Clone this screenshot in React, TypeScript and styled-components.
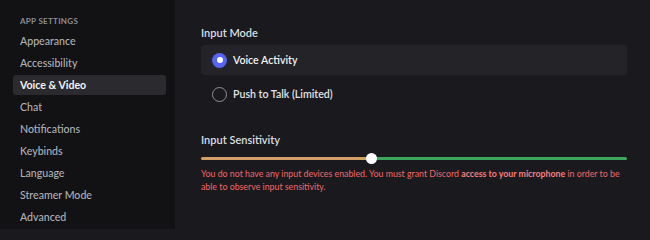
import React from "react";
import styled, { createGlobalStyle } from "styled-components";

const GlobalStyle = createGlobalStyle`
  html, body {
    margin: 0;
    padding: 0;
    background: #1a1a1e;
  }
  body {
    font-family: Lato, "Noto Sans", sans-serif;
    -webkit-font-smoothing: antialiased;
  }
`;

const Page = styled.div`
  display: flex;
  width: 650px;
  height: 229px;
  overflow: hidden;
`;

const Sidebar = styled.nav`
  width: 175px;
  flex-shrink: 0;
  background: #121214;
  padding: 5px 9px 0 13px;
  box-sizing: border-box;
  display: flex;
  flex-direction: column;
`;

const Divider = styled.div`
  height: 1px;
  margin: 0 6px 0 6px;
  background: #222226;
`;

const SectionTitle = styled.div`
  font-size: 8px;
  font-weight: 700;
  letter-spacing: 0.3px;
  color: #8b8e95;
  text-transform: uppercase;
  padding: 9px 0 0 7px;
  height: 15px;
  line-height: 15px;
  margin-bottom: 2px;
`;

const NavItem = styled.div<{ $active?: boolean }>`
  height: 20px;
  line-height: 20px;
  margin-bottom: 2px;
  padding-left: 7px;
  border-radius: 3px;
  font-size: 10.6px;
  font-weight: ${(p) => (p.$active ? 700 : 500)};
  color: ${(p) => (p.$active ? "#f2f3f5" : "#aeb1b6")};
  background: ${(p) => (p.$active ? "#2a2a2f" : "transparent")};
`;

const Main = styled.main`
  flex: 1;
  padding: 24px 23px 0 26px;
  display: flex;
  flex-direction: column;
`;

const Heading = styled.h3`
  margin: 0 0 4px 0;
  font-size: 11px;
  font-weight: 600;
  color: #dbdee1;
  height: 17px;
  line-height: 17px;
`;

const RadioRow = styled.label<{ $selected?: boolean }>`
  display: flex;
  align-items: center;
  gap: 6px;
  height: 30px;
  padding-left: 11px;
  margin-bottom: 4px;
  border-radius: 4px;
  background: ${(p) => (p.$selected ? "#232328" : "transparent")};
  font-size: 10.6px;
  font-weight: 600;
  color: ${(p) => (p.$selected ? "#f2f3f5" : "#e0e2e5")};
`;

const RadioDot = styled.span<{ $selected?: boolean }>`
  width: 15px;
  height: 15px;
  box-sizing: border-box;
  border-radius: 50%;
  flex-shrink: 0;
  display: flex;
  align-items: center;
  justify-content: center;
  background: ${(p) => (p.$selected ? "#5865f2" : "transparent")};
  border: ${(p) => (p.$selected ? "none" : "1.5px solid #8e9297")};
  &::after {
    content: "";
    display: ${(p) => (p.$selected ? "block" : "none")};
    width: 6px;
    height: 6px;
    border-radius: 50%;
    background: #ffffff;
  }
`;

const Section = styled.section`
  margin-top: 18px;
`;

const Slider = styled.div`
  position: relative;
  display: flex;
  align-items: center;
  height: 10px;
  margin: 5px 0 4px 0;
`;

const Track = styled.div<{ $color: string }>`
  height: 3px;
  background: ${(p) => p.$color};
  border-radius: 2px;
`;

const Thumb = styled.div`
  position: absolute;
  top: 0;
  width: 11px;
  height: 11px;
  margin-left: -5.5px;
  border-radius: 50%;
  background: #ffffff;
`;

const ErrorText = styled.p`
  margin: 0;
  font-size: 8.8px;
  line-height: 13px;
  color: #f0686a;
  strong {
    font-weight: 700;
    color: #f57e80;
  }
`;

const navItems = [
  "Appearance",
  "Accessibility",
  "Voice & Video",
  "Chat",
  "Notifications",
  "Keybinds",
  "Language",
  "Streamer Mode",
  "Advanced",
];

export default function App() {
  const threshold = 40;

  return (
    <>
      <GlobalStyle />
      <Page>
        <Sidebar>
          <Divider />
          <SectionTitle>App Settings</SectionTitle>
          {navItems.map((item) => (
            <NavItem key={item} $active={item === "Voice & Video"}>
              {item}
            </NavItem>
          ))}
        </Sidebar>
        <Main>
          <Heading>Input Mode</Heading>
          <RadioRow $selected>
            <RadioDot $selected />
            Voice Activity
          </RadioRow>
          <RadioRow>
            <RadioDot />
            Push to Talk (Limited)
          </RadioRow>
          <Section>
            <Heading>Input Sensitivity</Heading>
            <Slider>
              <Track $color="#d29f67" style={{ width: `${threshold}%` }} />
              <Track $color="#3ea55c" style={{ flex: 1 }} />
              <Thumb style={{ left: `${threshold}%` }} />
            </Slider>
            <ErrorText>
              You do not have any input devices enabled. You must grant Discord{" "}
              <strong>access to your microphone</strong> in order to be able to
              observe input sensitivity.
            </ErrorText>
          </Section>
        </Main>
      </Page>
    </>
  );
}
